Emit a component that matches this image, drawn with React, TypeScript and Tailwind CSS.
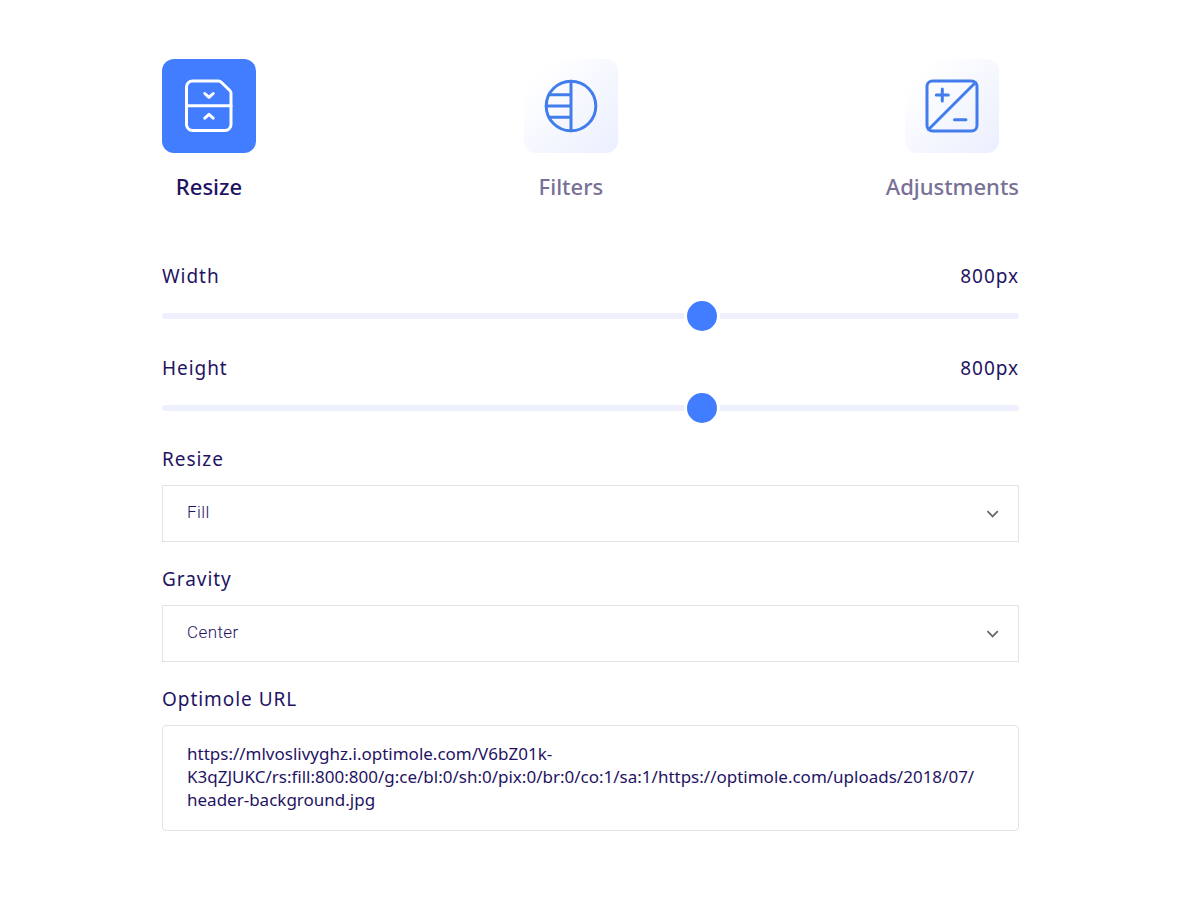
import { useState } from "react";
import type { ReactNode } from "react";
import clsx from "clsx";

const URL_VALUE =
  "https://mlvoslivyghz.i.optimole.com/V6bZ01k-K3qZJUKC/rs:fill:800:800/g:ce/bl:0/sh:0/pix:0/br:0/co:1/sa:1/https://optimole.com/uploads/2018/07/header-background.jpg";

const LABEL = "text-[19px] leading-7 tracking-wider";

function Icon({ children }: { children: ReactNode }) {
  return (
    <svg
      viewBox="0 0 94 94"
      className="size-full"
      fill="none"
      stroke="currentColor"
      strokeWidth="3"
      strokeLinecap="round"
      strokeLinejoin="round"
      aria-hidden="true"
    >
      {children}
    </svg>
  );
}

const tabs = [
  {
    name: "Resize",
    icon: (
      <Icon>
        <path d="M30.5 22H56.5a4 4 0 0 1 2.8 1.2L67.8 31.5a4 4 0 0 1 1.2 2.8V65.5a6 6 0 0 1-6 6H30.5a6 6 0 0 1-6-6V28a6 6 0 0 1 6-6Z" />
        <path d="M24.5 46.8H69M42.8 34.5l4.2 3.8 4.2-3.8M42.8 59.2l4.2-3.8 4.2 3.8" />
      </Icon>
    ),
  },
  {
    name: "Filters",
    icon: (
      <Icon>
        <circle cx="47" cy="47" r="24.8" />
        <path d="M47 22.2v49.6M25 35.8h22M22.2 47H47M25 58.2h22" />
      </Icon>
    ),
  },
  {
    name: "Adjustments",
    icon: (
      <Icon>
        <rect x="22" y="22" width="50" height="50" rx="5.5" />
        <path d="M23.5 70.5l47-47M37.3 30v12M31.3 36h12M49.5 60.7h11.5" />
      </Icon>
    ),
  },
];

function Slider({ label }: { label: string }) {
  const [value, setValue] = useState(800);
  const id = label.toLowerCase();

  return (
    <div>
      <div className={clsx(LABEL, "flex justify-between mb-2")}>
        <label htmlFor={id}>{label}</label>
        <output htmlFor={id}>{value}px</output>
      </div>
      <input
        id={id}
        type="range"
        min={100}
        max={1200}
        value={value}
        onChange={(e) => setValue(Number(e.target.value))}
        className="block w-full h-9 appearance-none bg-transparent cursor-pointer
          [&::-webkit-slider-runnable-track]:h-[6px]
          [&::-webkit-slider-runnable-track]:rounded-full
          [&::-webkit-slider-runnable-track]:bg-[#eef0fd]
          [&::-webkit-slider-thumb]:appearance-none
          [&::-webkit-slider-thumb]:size-9
          [&::-webkit-slider-thumb]:-mt-[15px]
          [&::-webkit-slider-thumb]:rounded-full
          [&::-webkit-slider-thumb]:border-3
          [&::-webkit-slider-thumb]:border-white
          [&::-webkit-slider-thumb]:bg-[#427dff]"
      />
    </div>
  );
}

function Select({ label, options }: { label: string; options: string[] }) {
  const id = `select-${label.toLowerCase()}`;

  return (
    <div>
      <label htmlFor={id} className={clsx(LABEL, "block mb-3")}>
        {label}
      </label>
      <div className="relative">
        <select
          id={id}
          className="block w-full h-[57px] px-6 pb-0.5 appearance-none border border-[#e2e2e4] bg-white
            font-['Roboto',sans-serif] font-light text-[17px] tracking-wide"
        >
          {options.map((option) => (
            <option key={option}>{option}</option>
          ))}
        </select>
        <svg
          viewBox="0 0 12 8"
          className="absolute right-5 top-1/2 w-3 h-2 -translate-y-1/2 pointer-events-none"
          fill="none"
          stroke="#6b6b76"
          strokeWidth="1.8"
          aria-hidden="true"
        >
          <path d="M0.4 1.2L5.6 6.5l5.2-5.3" />
        </svg>
      </div>
    </div>
  );
}

function App() {
  const [active, setActive] = useState("Resize");

  return (
    <main className="min-h-screen bg-white pl-[162px] pr-[181px] pt-[59px] pb-16 font-['Noto_Sans',sans-serif] text-[#1f1463]">
      <div className="flex justify-between">
        {tabs.map((tab) => (
          <button
            key={tab.name}
            type="button"
            aria-pressed={active === tab.name}
            onClick={() => setActive(tab.name)}
            className={clsx(
              "flex flex-col items-center gap-[19px] text-[22px] leading-7 font-medium cursor-pointer",
              active !== tab.name && "text-[#787097]",
            )}
          >
            <span
              className={clsx(
                "size-[94px] rounded-xl",
                active === tab.name
                  ? "bg-[#427dff] text-white"
                  : "bg-linear-to-br from-white from-15% to-[#ebeffe] text-[#427deb]",
              )}
            >
              {tab.icon}
            </span>
            {tab.name}
          </button>
        ))}
      </div>

      <div className="flex flex-col gap-5 mt-[62px]">
        <Slider label="Width" />
        <Slider label="Height" />
      </div>

      <div className="flex flex-col gap-[23px] mt-[19px]">
        <Select label="Resize" options={["Fill", "Fit", "Crop"]} />
        <Select label="Gravity" options={["Center", "North", "South", "East", "West"]} />

        <div>
          <label htmlFor="url" className={clsx(LABEL, "block mb-3")}>
            Optimole URL
          </label>
          <textarea
            id="url"
            readOnly
            value={URL_VALUE}
            className="block w-full h-[106px] pl-6 pr-10 py-4 resize-none overflow-hidden rounded border border-[#e2e2e4] bg-white text-[17px] leading-[23px]"
          />
        </div>
      </div>
    </main>
  );
}

export default App;
